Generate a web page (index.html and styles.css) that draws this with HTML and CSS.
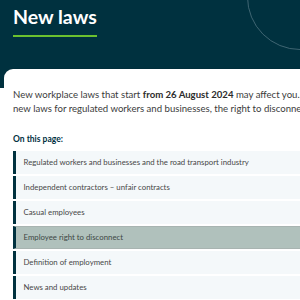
FILE: index.html
```html
<!DOCTYPE html>
<html lang="en">
<head>
<meta charset="utf-8">
<link rel="stylesheet" href="styles.css">
</head>
<body>
<header class="hero">
  <span class="ring"></span>
  <h1 class="title">New laws</h1>
</header>
<main class="card">
  <p class="intro">New workplace laws that start <strong>from 26 August 2024</strong> may affect you. Find out about the new laws for regulated workers and businesses, the right to disconnect and more.</p>
  <h2 class="toc-title">On this page:</h2>
  <ul class="toc">
    <li class="toc-item">Regulated workers and businesses and the road transport industry</li>
    <li class="toc-item">Independent contractors – unfair contracts</li>
    <li class="toc-item">Casual employees</li>
    <li class="toc-item active">Employee right to disconnect</li>
    <li class="toc-item">Definition of employment</li>
    <li class="toc-item">News and updates</li>
  </ul>
</main>
</body>
</html>
```
FILE: styles.css
```css
html, body {
  margin: 0;
  padding: 0;
  overflow: hidden;
  background: #ffffff;
  font-family: Lato, "Open Sans", sans-serif;
}
.hero {
  position: relative;
  overflow: hidden;
  background: #00313f;
  height: 88px;
  padding: 0 13px;
  box-sizing: border-box;
}
.ring {
  position: absolute;
  left: 247px;
  top: -56px;
  width: 106px;
  height: 106px;
  border-radius: 50%;
  border: 1px solid #3f6572;
  box-sizing: border-box;
}
.title {
  display: inline-block;
  margin: 0;
  padding-top: 5px;
  padding-bottom: 6px;
  font-size: 19.5px;
  line-height: 24px;
  font-weight: 700;
  color: #ffffff;
  border-bottom: 2.5px solid #6cc02f;
}
.card {
  position: relative;
  margin: -19px 0 0 3.5px;
  width: 400px;
  background: #ffffff;
  border-radius: 9px 0 0 0;
  padding: 19px 10px 0 9.5px;
  box-sizing: border-box;
  box-shadow: 0 -1px 0 rgba(0,0,0,0.06);
}
.intro {
  margin: 0;
  font-size: 9.6px;
  line-height: 14px;
  color: #3b3b3b;
}
.intro strong {
  font-weight: 700;
  color: #2c2c2c;
}
.toc-title {
  margin: 18px 0 6px;
  font-size: 8.5px;
  line-height: 11px;
  font-weight: 700;
  color: #00313f;
}
.toc {
  list-style: none;
  margin: 0;
  padding: 0;
}
.toc-item {
  height: 23px;
  margin-bottom: 2px;
  box-sizing: border-box;
  border-left: 3px solid #00313f;
  background: #f4f8fa;
  padding-left: 7.5px;
  font-size: 7.8px;
  line-height: 23px;
  color: #474747;
}
.toc-item.active {
  background: #b0c1bc;
  border-top: 1px solid #a8b4b1;
  border-bottom: 1px solid #a8b4b1;
  line-height: 21px;
  color: #3d4744;
}
```
